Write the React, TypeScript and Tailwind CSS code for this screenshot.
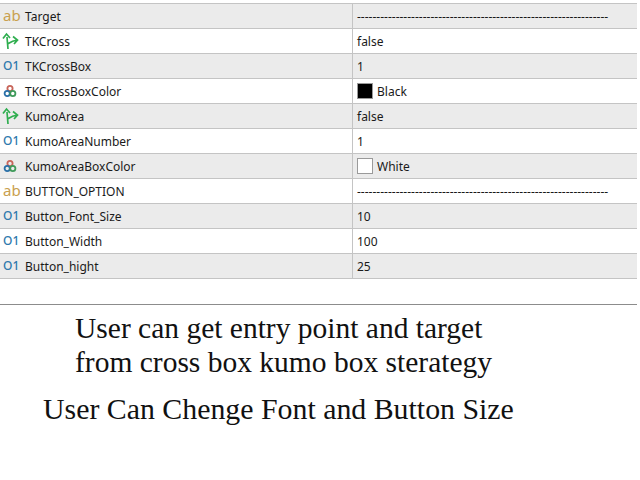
const DASHES = "-----------------------------------------------------------------";

type Kind = "text" | "bool" | "num" | "color";

type Row = { kind: Kind; name: string; value: string; swatch?: string };

const ROWS: Row[] = [
  { kind: "text", name: "Target", value: DASHES },
  { kind: "bool", name: "TKCross", value: "false" },
  { kind: "num", name: "TKCrossBox", value: "1" },
  { kind: "color", name: "TKCrossBoxColor", value: "Black", swatch: "bg-black" },
  { kind: "bool", name: "KumoArea", value: "false" },
  { kind: "num", name: "KumoAreaNumber", value: "1" },
  { kind: "color", name: "KumoAreaBoxColor", value: "White", swatch: "bg-white" },
  { kind: "text", name: "BUTTON_OPTION", value: DASHES },
  { kind: "num", name: "Button_Font_Size", value: "10" },
  { kind: "num", name: "Button_Width", value: "100" },
  { kind: "num", name: "Button_hight", value: "25" },
];

export default function App() {
  return (
    <div className="h-[480px] w-[640px] overflow-hidden bg-white font-['Noto_Sans',sans-serif]">
      <div className="h-[3px]" />
      <div className="w-[637px] border-t border-[#c4c4c4]">
        {ROWS.map((row, i) => (
          <PropertyRow key={row.name} row={row} shaded={i % 2 === 0} />
        ))}
      </div>

      <div className="mt-[25px] w-[637px] border-t border-[#8c8c8c] font-['Liberation_Serif',serif] leading-[34px] text-[#111]">
        <p className="mt-[6px] pl-[75px] text-[29.5px]">User can get entry point and target</p>
        <p className="pl-[75px] text-[29.5px]">from cross box kumo box sterategy</p>
        <p className="mt-[13px] pl-[43px] text-[29.85px]">User Can Chenge Font and Button Size</p>
      </div>
    </div>
  );
}

function PropertyRow({ row, shaded }: { row: Row; shaded: boolean }) {
  return (
    <div
      className={[
        "flex h-[25px] border-b border-[#c4c4c4] pt-[2px] text-[12px] leading-[22px] text-[#1a1a1a]",
        shaded ? "bg-[#ebebeb]" : "bg-white",
      ].join(" ")}
    >
      <div className="flex w-[352px] items-center">
        <span className="flex w-[25px] pl-[2px]">
          <KindIcon kind={row.kind} />
        </span>
        <span>{row.name}</span>
      </div>
      <div className="-mt-[2px] flex flex-1 items-center gap-[4px] border-l border-[#c4c4c4] pl-[4px]">
        {row.swatch && (
          <span className={`h-4 w-4 border border-[#9a9a9a] ${row.swatch}`} />
        )}
        <span className="pt-[2px]">{row.value}</span>
      </div>
    </div>
  );
}

function KindIcon({ kind }: { kind: Kind }) {
  if (kind === "text") {
    return (
      <span className="-mt-[3px] pl-[1px] text-[15px] leading-none text-[#c9a04e]">ab</span>
    );
  }
  if (kind === "num") {
    return (
      <span className="-mt-[2px] pl-[1px] text-[12px] font-medium leading-none text-[#2f79ad]">
        O1
      </span>
    );
  }
  if (kind === "bool") {
    return (
      <svg width="17" height="18" viewBox="0 0 17 18" fill="none" stroke="#2fae4f" strokeWidth="1.7" className="-mt-[2px]">
        <path d="M6 17 L5 5 M1 6.5 L4.5 2 L8 6 M5.5 12 C8 10.5 10 9 15 8 M11 4.5 L15.5 8 L12 12" />
      </svg>
    );
  }
  return (
    <svg width="14" height="14" viewBox="0 0 14 14" strokeWidth="1.8" fill="none" className="-mt-[2px] ml-[1px]">
      <circle cx="7" cy="4.5" r="2.6" stroke="#c8655a" />
      <circle cx="4.2" cy="9.5" r="2.6" stroke="#2a6fa8" />
      <circle cx="9.8" cy="9.5" r="2.6" stroke="#3f9a5a" />
    </svg>
  );
}
